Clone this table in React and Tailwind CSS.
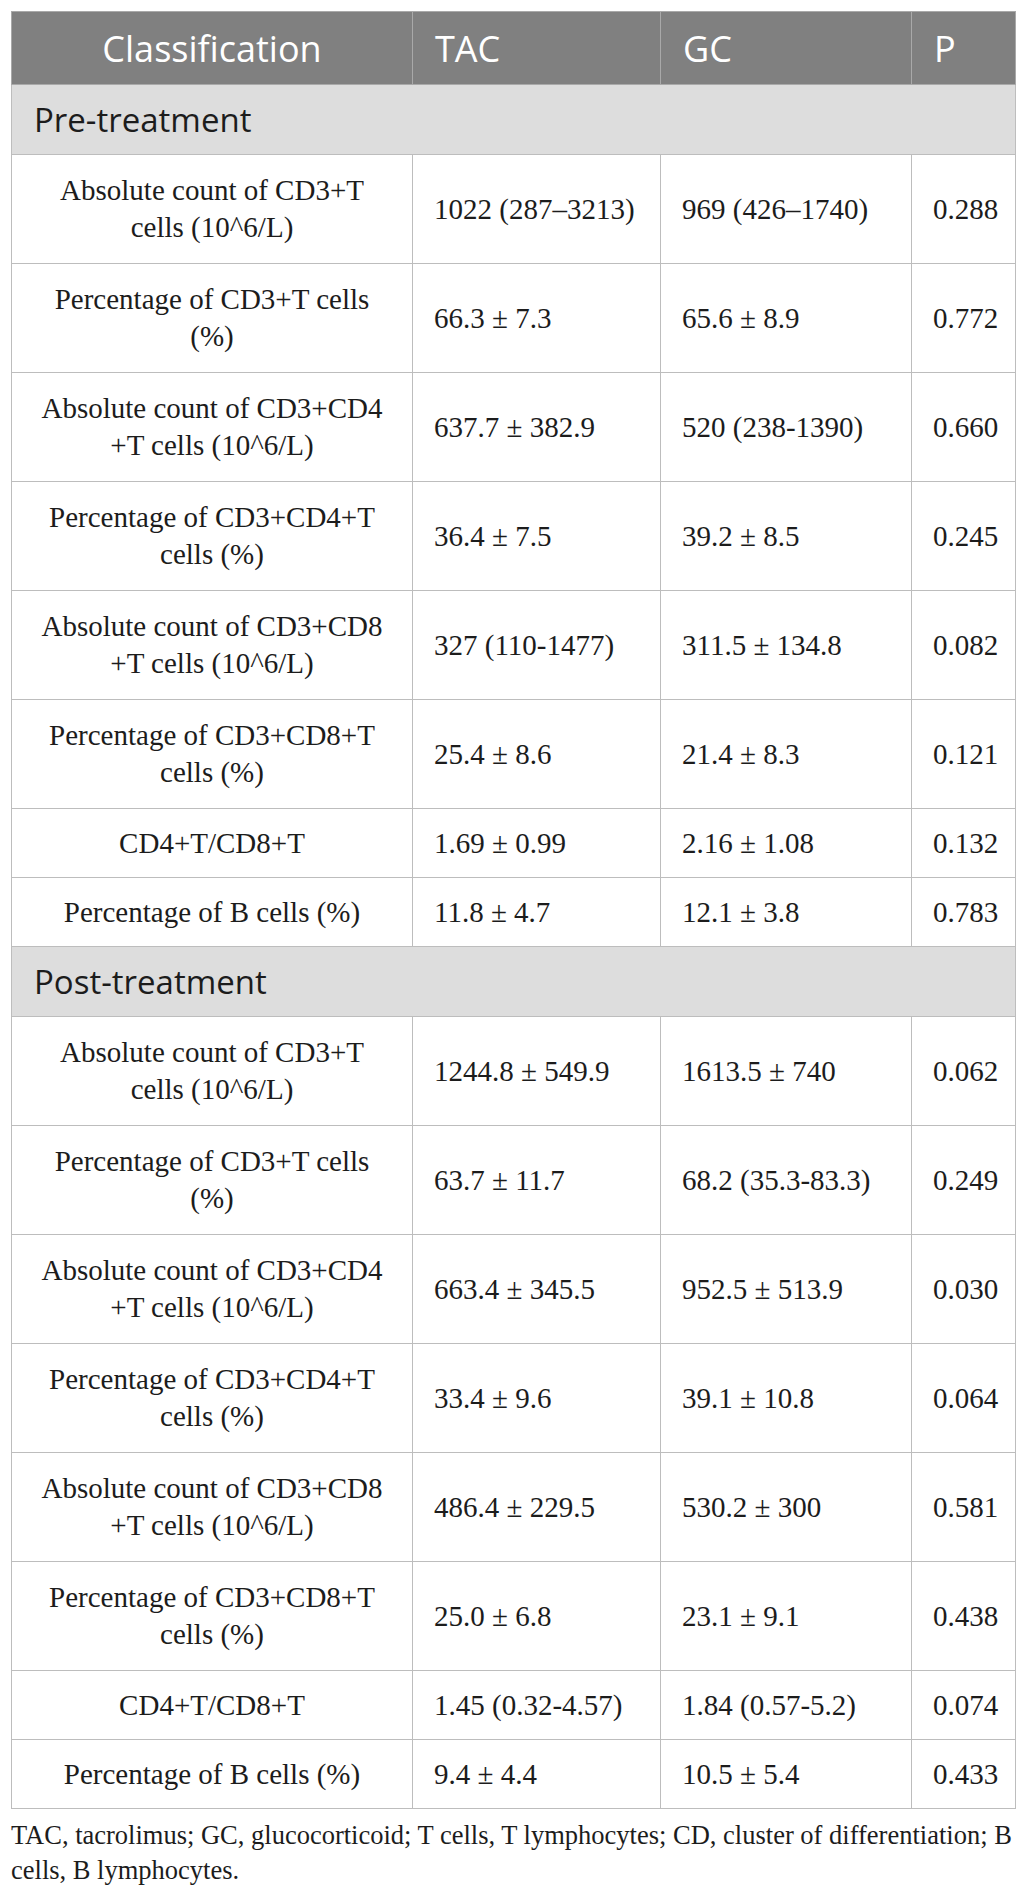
const sections = [
  {
    title: "Pre-treatment",
    rows: [
      { label: ["Absolute count of CD3+T", "cells (10^6/L)"], tac: "1022 (287–3213)", gc: "969 (426–1740)", p: "0.288" },
      { label: ["Percentage of CD3+T cells", "(%)"], tac: "66.3 ± 7.3", gc: "65.6 ± 8.9", p: "0.772" },
      { label: ["Absolute count of CD3+CD4", "+T cells (10^6/L)"], tac: "637.7 ± 382.9", gc: "520 (238-1390)", p: "0.660" },
      { label: ["Percentage of CD3+CD4+T", "cells (%)"], tac: "36.4 ± 7.5", gc: "39.2 ± 8.5", p: "0.245" },
      { label: ["Absolute count of CD3+CD8", "+T cells (10^6/L)"], tac: "327 (110-1477)", gc: "311.5 ± 134.8", p: "0.082" },
      { label: ["Percentage of CD3+CD8+T", "cells (%)"], tac: "25.4 ± 8.6", gc: "21.4 ± 8.3", p: "0.121" },
      { label: ["CD4+T/CD8+T"], tac: "1.69 ± 0.99", gc: "2.16 ± 1.08", p: "0.132" },
      { label: ["Percentage of B cells (%)"], tac: "11.8 ± 4.7", gc: "12.1 ± 3.8", p: "0.783" },
    ],
  },
  {
    title: "Post-treatment",
    rows: [
      { label: ["Absolute count of CD3+T", "cells (10^6/L)"], tac: "1244.8 ± 549.9", gc: "1613.5 ± 740", p: "0.062" },
      { label: ["Percentage of CD3+T cells", "(%)"], tac: "63.7 ± 11.7", gc: "68.2 (35.3-83.3)", p: "0.249" },
      { label: ["Absolute count of CD3+CD4", "+T cells (10^6/L)"], tac: "663.4 ± 345.5", gc: "952.5 ± 513.9", p: "0.030" },
      { label: ["Percentage of CD3+CD4+T", "cells (%)"], tac: "33.4 ± 9.6", gc: "39.1 ± 10.8", p: "0.064" },
      { label: ["Absolute count of CD3+CD8", "+T cells (10^6/L)"], tac: "486.4 ± 229.5", gc: "530.2 ± 300", p: "0.581" },
      { label: ["Percentage of CD3+CD8+T", "cells (%)"], tac: "25.0 ± 6.8", gc: "23.1 ± 9.1", p: "0.438" },
      { label: ["CD4+T/CD8+T"], tac: "1.45 (0.32-4.57)", gc: "1.84 (0.57-5.2)", p: "0.074" },
      { label: ["Percentage of B cells (%)"], tac: "9.4 ± 4.4", gc: "10.5 ± 5.4", p: "0.433" },
    ],
  },
];

const headCell = "border border-[#a9a9a9] px-[22px] pt-[15px] pb-[13px] text-left font-normal leading-[44px]";

const App = () => {
  return (
    <div className="min-h-screen bg-white px-[11px] pt-[11px]">
      <table className="w-[1004px] table-fixed border-collapse">
        <colgroup>
          <col className="w-[401px]" />
          <col className="w-[248px]" />
          <col className="w-[251px]" />
          <col className="w-[104px]" />
        </colgroup>
        <thead>
          <tr className="bg-[#808080] text-white font-['Open_Sans',sans-serif] text-[36px]">
            <th className={headCell + " !text-center"}>Classification</th>
            <th className={headCell}>TAC</th>
            <th className={headCell}>GC</th>
            <th className={headCell}>P</th>
          </tr>
        </thead>
        <tbody className="font-['Liberation_Serif',serif] text-[29px] leading-[37px] text-[#1c1c1c]">
          {sections.map((section) => (
            <>
              <tr key={section.title} className="bg-[#dddddd]">
                <td
                  colSpan={4}
                  className="border border-[#bdbdbd] px-[22px] py-[15px] font-['Open_Sans',sans-serif] text-[33px] leading-[39px] text-[#1c1c1c]"
                >
                  {section.title}
                </td>
              </tr>
              {section.rows.map((row, i) => {
                // two-line labels get a bit more padding so rows land at 109px / 69px
                const cell =
                  "border border-[#bdbdbd] px-[21px] text-left align-middle whitespace-nowrap " +
                  (row.label.length > 1 ? "py-[17px]" : "py-[15.5px]");
                return (
                  <tr key={section.title + i}>
                    <td className={cell + " !text-center"}>
                      {row.label.map((line) => (
                        <div key={line}>{line}</div>
                      ))}
                    </td>
                    <td className={cell}>{row.tac}</td>
                    <td className={cell}>{row.gc}</td>
                    <td className={cell}>{row.p}</td>
                  </tr>
                );
              })}
            </>
          ))}
        </tbody>
      </table>
      <p className="mt-[9px] w-[1010px] font-['Liberation_Serif',serif] text-[26.5px] leading-[35px] text-[#1c1c1c]">
        TAC, tacrolimus; GC, glucocorticoid; T cells, T lymphocytes; CD, cluster of differentiation; B cells, B
        lymphocytes.
      </p>
    </div>
  );
};

export default App;
